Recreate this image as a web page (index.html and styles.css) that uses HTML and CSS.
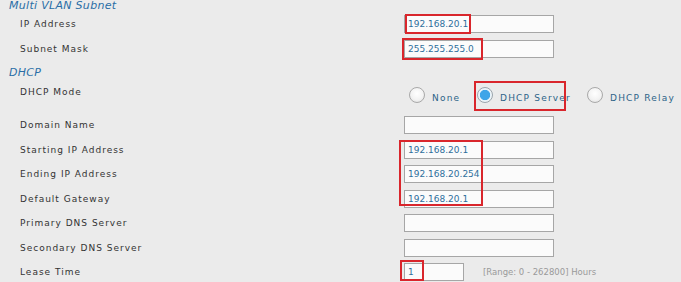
FILE: index.html
```html
<!DOCTYPE html>
<html lang="en">
<head>
    <meta charset="UTF-8">
    <title>Multi VLAN Subnet</title>
    <link rel="stylesheet" href="styles.css">
</head>
<body>
    <div class="page">
        <div class="section-title first">Multi VLAN Subnet</div>
        <div class="row">
            <span class="label">IP Address</span>
            <input type="text" class="text-field" value="192.168.20.1">
        </div>
        <div class="row">
            <span class="label">Subnet Mask</span>
            <input type="text" class="text-field" value="255.255.255.0">
        </div>

        <div class="section-title">DHCP</div>
        <div class="row mode-row">
            <span class="label">DHCP Mode</span>
            <div class="radio-group">
                <label class="radio-item item-none"><span class="radio"></span>None</label>
                <label class="radio-item item-server"><span class="radio checked"></span>DHCP Server</label>
                <label class="radio-item"><span class="radio"></span>DHCP Relay</label>
            </div>
        </div>
        <div class="row">
            <span class="label">Domain Name</span>
            <input type="text" class="text-field" value="">
        </div>
        <div class="row">
            <span class="label">Starting IP Address</span>
            <input type="text" class="text-field" value="192.168.20.1">
        </div>
        <div class="row">
            <span class="label">Ending IP Address</span>
            <input type="text" class="text-field" value="192.168.20.254">
        </div>
        <div class="row">
            <span class="label">Default Gateway</span>
            <input type="text" class="text-field" value="192.168.20.1">
        </div>
        <div class="row">
            <span class="label">Primary DNS Server</span>
            <input type="text" class="text-field" value="">
        </div>
        <div class="row">
            <span class="label">Secondary DNS Server</span>
            <input type="text" class="text-field" value="">
        </div>
        <div class="row">
            <span class="label">Lease Time</span>
            <input type="text" class="text-field short" value="1">
            <span class="hint">[Range: 0 - 262800] Hours</span>
        </div>

        <!-- highlight marks drawn over the form -->
        <div class="mark mark-ip"></div>
        <div class="mark mark-mask"></div>
        <div class="mark mark-server"></div>
        <div class="mark mark-range"></div>
        <div class="mark mark-lease"></div>
    </div>
</body>
</html>
```

FILE: styles.css
```css
body {
    margin: 0;
    background-color: #ebebeb;
    font-family: "DejaVu Sans", Verdana, sans-serif;
    overflow: hidden;
}
.page {
    position: relative;
    width: 681px;
    height: 282px;
}
.section-title {
    height: 20px;
    padding: 5px 0 0 9px;
    box-sizing: border-box;
    font-size: 11px;
    line-height: 13px;
    font-style: italic;
    letter-spacing: 0.3px;
    color: #2a6ea6;
}
.section-title.first {
    height: 12px;
    padding-top: 0;
    line-height: 12px;
}
.row {
    display: flex;
    align-items: center;
    height: 24.5px;
}
.label {
    width: 384px;
    padding-left: 20px;
    font-size: 9px;
    letter-spacing: 1px;
    color: #333;
}
.text-field {
    width: 150px;
    height: 18px;
    box-sizing: border-box;
    margin: 0;
    padding: 0 3px;
    border: 1px solid #a6a6a6;
    border-radius: 0;
    background-color: #fbfbfb;
    font-family: "DejaVu Sans", Verdana, sans-serif;
    font-size: 9px;
    color: #2f6f9b;
    outline: none;
}
.text-field.short {
    width: 60px;
}
.hint {
    margin-left: 19px;
    font-size: 8.5px;
    color: #9a9a9a;
}
.mode-row {
    height: 31.75px;
    align-items: flex-start;
}
.mode-row .label {
    padding-top: 5px;
    line-height: 12px;
}
.radio-group {
    display: flex;
    padding: 6px 0 0 5px;
}
.radio-item {
    display: flex;
    align-items: flex-end;
    gap: 7px;
    font-size: 9px;
    line-height: 10px;
    letter-spacing: 1.2px;
    color: #2d6488;
}
.item-none {
    width: 68px;
}
.item-server {
    width: 110px;
}
.radio {
    width: 16px;
    height: 16px;
    box-sizing: border-box;
    border: 1px solid #a9a9a9;
    border-radius: 50%;
    background: radial-gradient(circle at 50% 40%, #ffffff 0%, #f3f3f3 55%, #dcdcdc 100%);
}
.radio.checked {
    border-color: #9aa5ad;
    background: radial-gradient(circle, #3ea5e8 0%, #3ea5e8 48%, #e6f3fb 56%, #f4f4f4 72%, #d6d6d6 100%);
}
.mark {
    position: absolute;
    border: 2px solid #d9262c;
    box-sizing: border-box;
}
.mark-ip {
    left: 405px;
    top: 14px;
    width: 66px;
    height: 20px;
}
.mark-mask {
    left: 402px;
    top: 38px;
    width: 81px;
    height: 22px;
}
.mark-server {
    left: 474px;
    top: 81px;
    width: 92px;
    height: 30px;
}
.mark-range {
    left: 399px;
    top: 140px;
    width: 84px;
    height: 66px;
}
.mark-lease {
    left: 400px;
    top: 260px;
    width: 24px;
    height: 21px;
}
```
